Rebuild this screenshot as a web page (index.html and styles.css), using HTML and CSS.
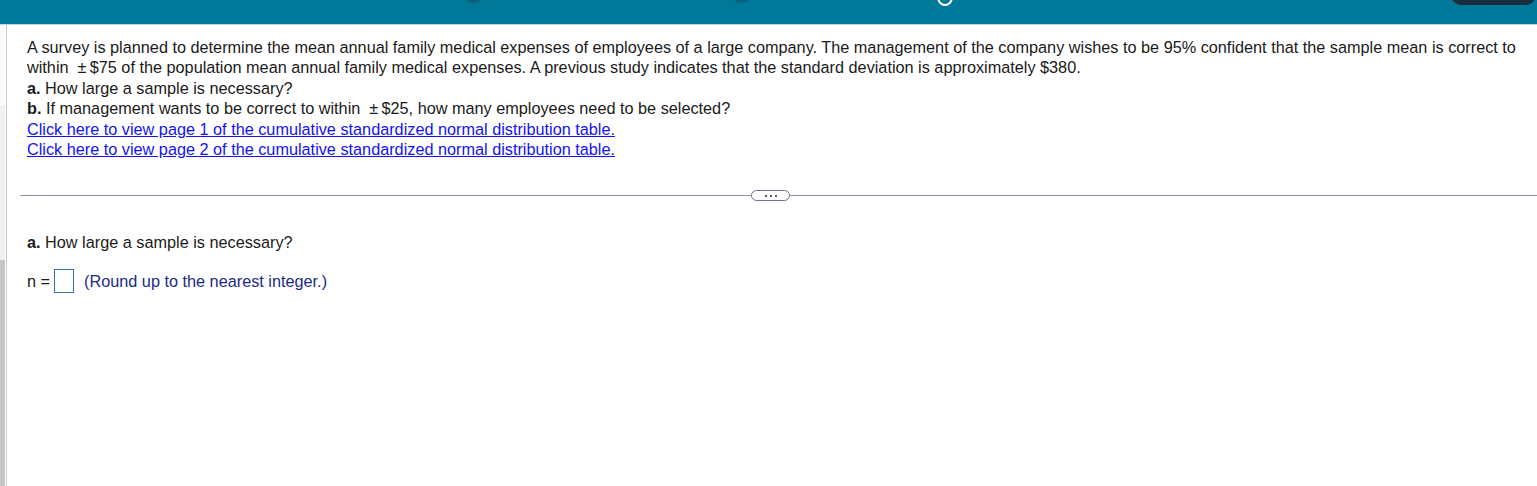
FILE: index.html
```html
<!DOCTYPE html>
<html>
<head>
<meta charset="utf-8">
<link rel="stylesheet" href="styles.css">
</head>
<body>
<header class="topbar">
  <span class="dot dot-a"></span>
  <span class="dot dot-b"></span>
  <span class="ring"></span>
  <span class="pill"></span>
</header>
<div class="frame">
  <div class="gutter">
    <div class="g1"></div>
    <div class="g2"></div>
    <div class="g3"></div>
  </div>
  <div class="rule-v"></div>
  <main class="content">
    <section class="question">
      <p>A survey is planned to determine the mean annual family medical expenses of employees of a large company. The management of the company wishes to be 95% confident that the sample mean is correct to within &nbsp;&plusmn;&thinsp;$75 of the population mean annual family medical expenses. A previous study indicates that the standard deviation is approximately $380.</p>
      <p><b>a.</b> How large a sample is necessary?</p>
      <p><b>b.</b> If management wants to be correct to within &nbsp;&plusmn;&thinsp;$25, how many employees need to be selected?</p>
      <p><a href="#">Click here to view page 1 of the cumulative standardized normal distribution table.</a></p>
      <p><a href="#">Click here to view page 2 of the cumulative standardized normal distribution table.</a></p>
    </section>
    <div class="divider">
      <span class="line"></span>
      <span class="more"><i></i><i></i><i></i></span>
      <span class="line"></span>
    </div>
    <section class="answer">
      <p><b>a.</b> How large a sample is necessary?</p>
      <p class="row"><span class="lbl">n =</span><span class="box"></span><span class="hint">(Round up to the nearest integer.)</span></p>
    </section>
  </main>
</div>
</body>
</html>
```
FILE: styles.css
```css
html, body {
  margin: 0;
  padding: 0;
  background: #fff;
}
body {
  font-family: "Liberation Sans", Arial, sans-serif;
  font-size: 16.25px;
  color: #1a1a1a;
  height: 486px;
  overflow: hidden;
}
.topbar {
  height: 24px;
  background: #00789a;
  border-bottom: 1px solid #c9d2de;
  display: flex;
  align-items: flex-start;
  overflow: hidden;
}
.dot {
  width: 26px;
  height: 26px;
  border-radius: 50%;
  background: #0d6079;
  margin-top: -23px;
}
.dot-a { margin-left: 462px; }
.dot-b { margin-left: 245px; }
.ring {
  width: 14px;
  height: 14px;
  border: 2px solid #fff;
  border-radius: 50%;
  margin-top: -12px;
  margin-left: 185px;
}
.pill {
  width: 100px;
  height: 24px;
  border-radius: 12px;
  background: #182d40;
  margin-top: -19px;
  margin-left: 497px;
}
.frame {
  display: flex;
  height: 461px;
}
.gutter {
  width: 5px;
  display: flex;
  flex-direction: column;
}
.g1 { height: 80px; background: #fbfbfb; }
.g2 { height: 155px; background: #f0f0f0; }
.g3 { flex: 1; background: #c6c6c6; }
.rule-v {
  width: 1px;
  margin-left: 1px;
  background: #c9c9d6;
}
.content {
  flex: 1;
  padding-top: 12px;
}
.question {
  padding-left: 20px;
  padding-right: 14px;
}
p {
  margin: 0;
  line-height: 20.4px;
}
b { font-weight: bold; }
a {
  color: #1212f5;
  text-decoration: underline;
}
.divider {
  display: flex;
  align-items: center;
  margin-top: 31px;
  margin-left: 13px;
}
.line {
  flex: 1;
  height: 1px;
  background: #8b93a3;
}
.line:first-child { flex: 0 0 731px; }
.more {
  width: 37px;
  height: 9px;
  border: 1px solid #6c7687;
  border-radius: 6px;
  display: flex;
  align-items: center;
  justify-content: center;
  gap: 3px;
  background: #fff;
}
.more i {
  width: 2px;
  height: 2px;
  background: #55606f;
}
.answer {
  padding-left: 20px;
  margin-top: 31px;
}
.row {
  display: flex;
  align-items: center;
  margin-top: 16px;
}
.lbl { color: #1a1a1a; }
.box {
  width: 18px;
  height: 22px;
  border: 1px solid #3a6cc4;
  margin-left: 4px;
}
.hint {
  color: #1c2a86;
  margin-left: 10px;
}
```
